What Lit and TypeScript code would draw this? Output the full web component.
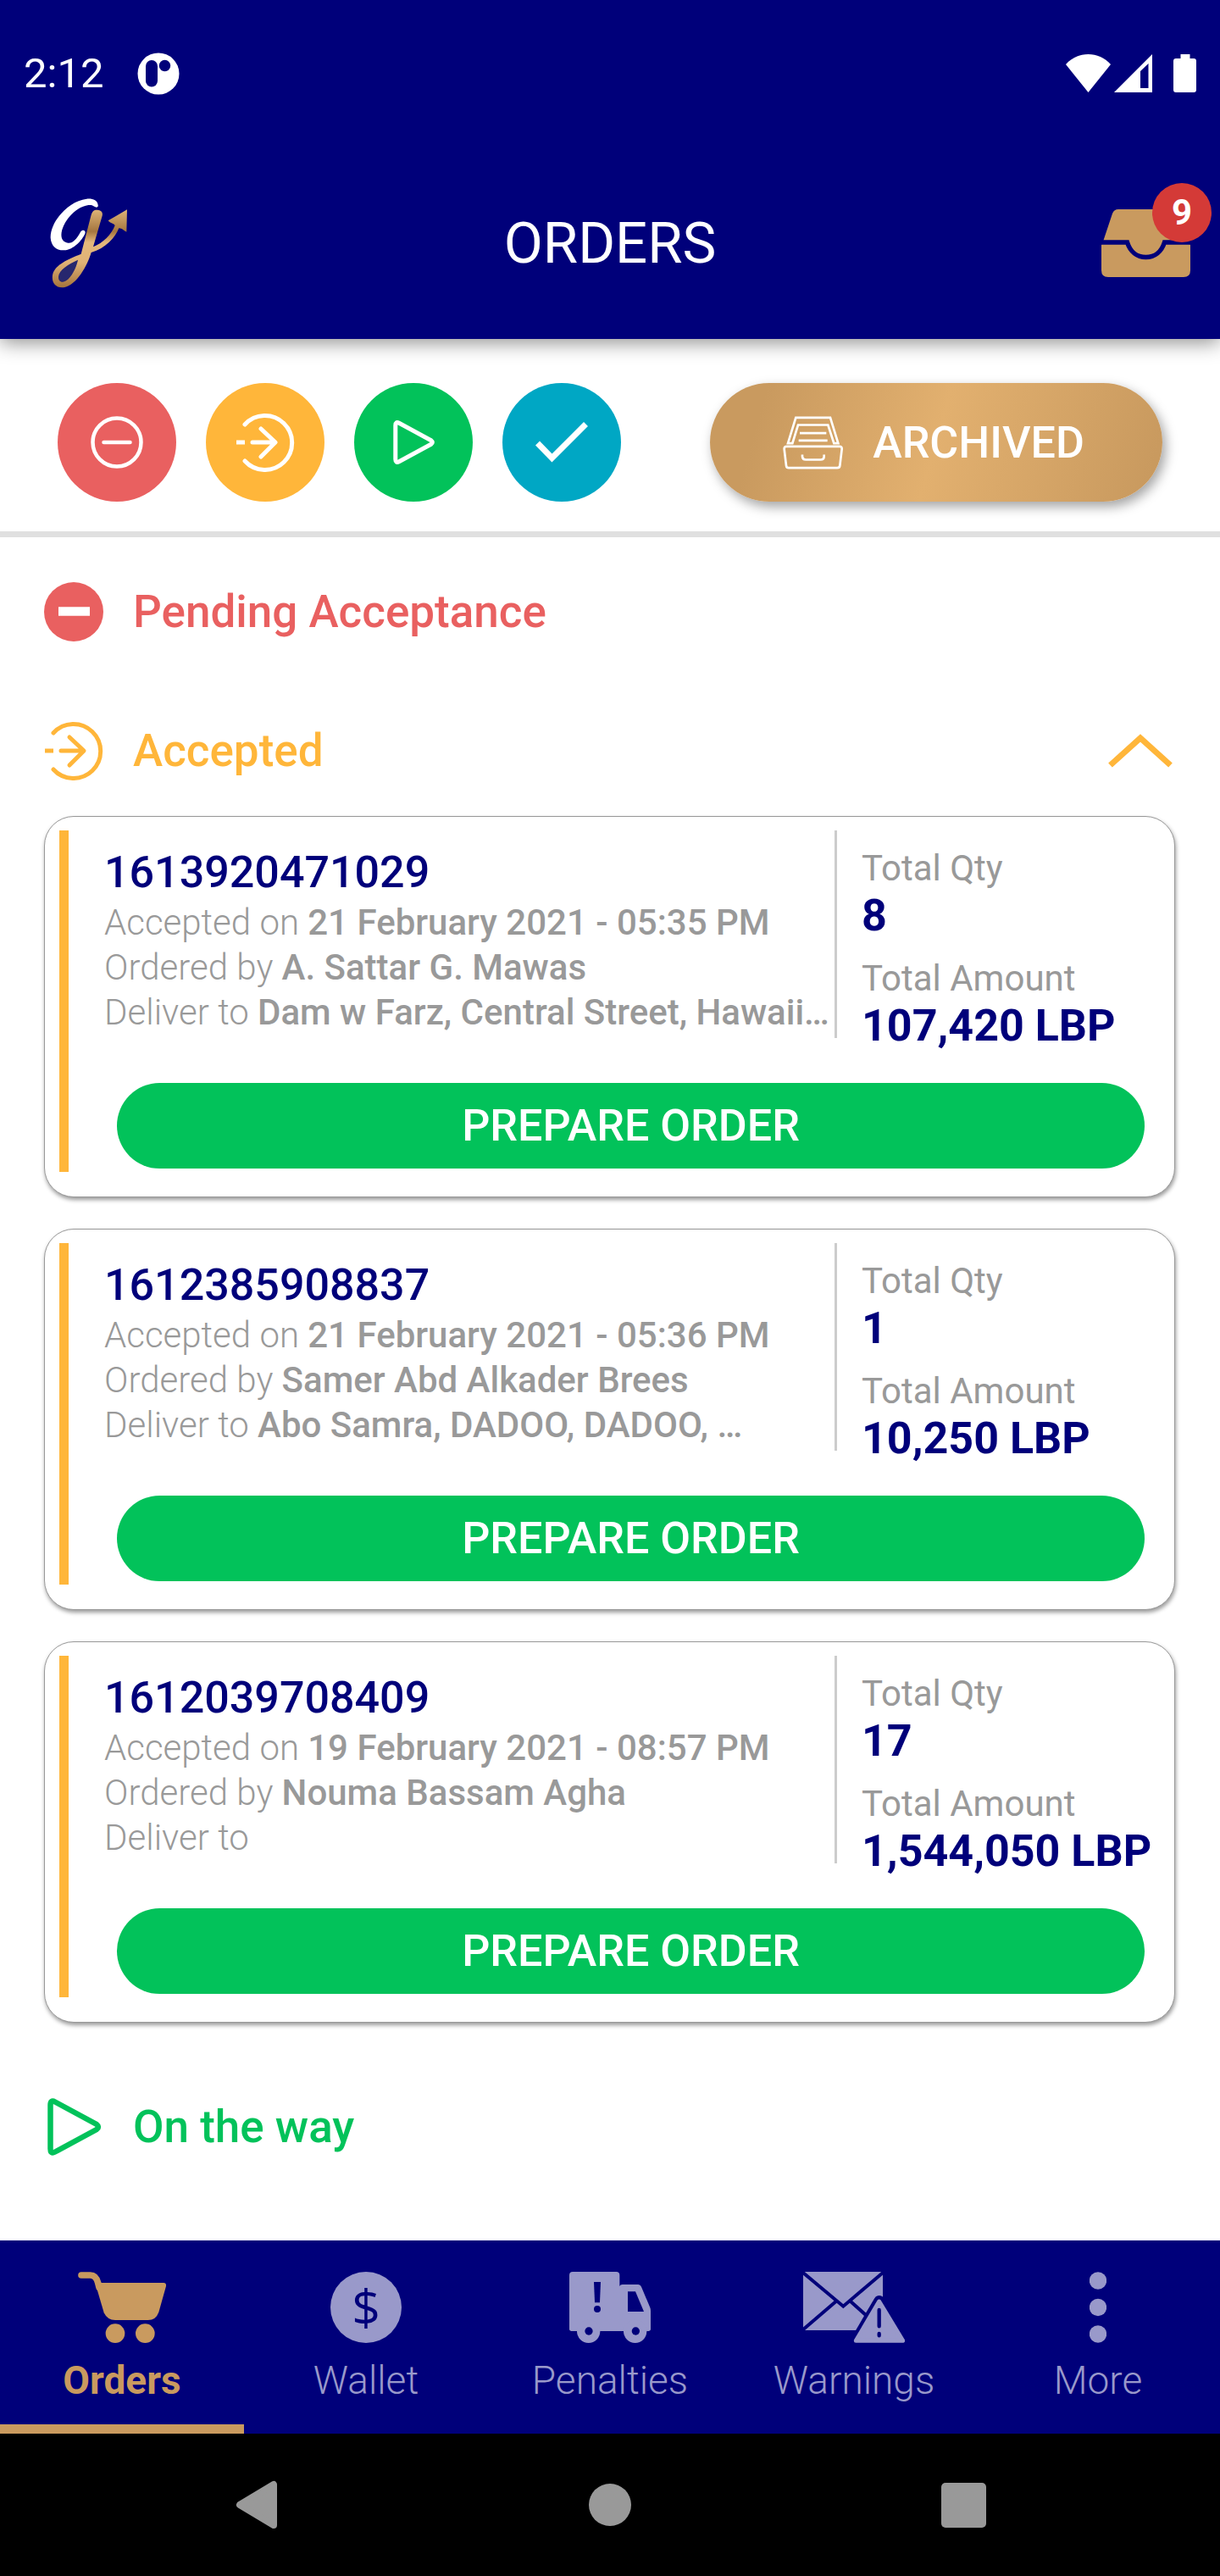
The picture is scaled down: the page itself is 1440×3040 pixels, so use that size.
import { LitElement, html, css, svg } from "lit";
import { customElement, property, state } from "lit/decorators.js";
import { classMap } from "lit/directives/class-map.js";

interface Order {
  id: string;
  acceptedOn: string;
  orderedBy: string;
  deliverTo: string;
  quantity: string;
  amount: string;
}

const ORDERS: Order[] = [
  {
    id: "1613920471029",
    acceptedOn: "21 February 2021 - 05:35 PM",
    orderedBy: "A. Sattar G. Mawas",
    deliverTo: "Dam w Farz, Central Street, Hawaii…",
    quantity: "8",
    amount: "107,420 LBP",
  },
  {
    id: "1612385908837",
    acceptedOn: "21 February 2021 - 05:36 PM",
    orderedBy: "Samer Abd Alkader Brees",
    deliverTo: "Abo Samra, DADOO, DADOO, …",
    quantity: "1",
    amount: "10,250 LBP",
  },
  {
    id: "1612039708409",
    acceptedOn: "19 February 2021 - 08:57 PM",
    orderedBy: "Nouma Bassam Agha",
    deliverTo: "",
    quantity: "17",
    amount: "1,544,050 LBP",
  },
];

const acceptedShape = svg`
  <g fill="none" stroke="currentColor" stroke-width="5" stroke-linecap="round" stroke-linejoin="round">
    <path d="M11 14A32 32 0 1 1 11 57"/>
    <path d="M20 35H46M30 19L47 35L30 52"/>
    <path d="M1 35H11" stroke-linecap="butt"/>
  </g>`;

const playShape = svg`
  <path d="M7.500 9Q7.500 2.500 13 5.500L62 32Q66 35 62 38L13 64.500Q7.500 67.500 7.500 61Z" fill="none" stroke="currentColor" stroke-width="6.500"/>`;

const icons = {
  pendingOutline: html`<svg width="62" height="62" viewBox="0 0 62 62" aria-hidden="true">
    <circle cx="31" cy="31" r="28.500" fill="none" stroke="currentColor" stroke-width="4.500"/>
    <path d="M15.500 31H46.500" stroke="currentColor" stroke-width="4.500" stroke-linecap="round"/>
  </svg>`,
  pendingSolid: html`<svg width="70" height="70" viewBox="0 0 70 70" aria-hidden="true">
    <circle cx="35" cy="35" r="35" fill="currentColor"/>
    <path d="M17 34.500H54" stroke="#fff" stroke-width="10.500"/>
  </svg>`,
  accepted: html`<svg width="70" height="70" viewBox="0 0 70 70" aria-hidden="true">${acceptedShape}</svg>`,
  play: html`<svg width="70" height="70" viewBox="0 0 70 70" aria-hidden="true">${playShape}</svg>`,
  playSmall: html`<svg width="54" height="54" viewBox="0 0 70 70" aria-hidden="true">${playShape}</svg>`,
  check: html`<svg width="62" height="48" viewBox="0 0 62 48" aria-hidden="true">
    <path d="M2.500 25L19.500 42.500L59.500 2.500" fill="none" stroke="currentColor" stroke-width="7"/>
  </svg>`,
  chevron: html`<svg width="76" height="40" viewBox="0 0 76 40" aria-hidden="true">
    <path d="M2.500 37L38 5L73.500 37" fill="none" stroke="currentColor" stroke-width="7"/>
  </svg>`,
  archive: html`<svg width="71" height="63" viewBox="26 32 213 188" aria-hidden="true">
    <g fill="none" stroke="currentColor" stroke-width="8">
      <path d="M44 128L72 37H194L222 128H207L186 63H80L60 128Z"/>
      <path d="M86 92H180M82 118H184"/>
      <path d="M40 139H226Q236 139 235 149L228 207Q227 215 219 215H47Q39 215 38 207L31 149Q30 139 40 139Z"/>
      <path d="M95 168V175Q96 186 107 186H160Q172 186 172 175V168"/>
    </g>
  </svg>`,
  inbox: html`<svg width="105" height="80" viewBox="1300 246 105 80" aria-hidden="true">
    <path d="M1302 284L1313 251Q1315 246 1320 246H1385Q1390 246 1392 251L1403 284L1405 288V318Q1405 326 1397 326H1308Q1300 326 1300 318V288Z" fill="#c99a5f"/>
    <path d="M1296 285H1330.500C1334 296 1342 302.500 1352.500 302.500S1371 296 1374.500 285H1409" fill="none" stroke="#00007a" stroke-width="5.500"/>
  </svg>`,
  logo: html`<svg width="92" height="106" viewBox="28 22 276 318" aria-hidden="true">
    <defs>
      <linearGradient id="gold" x1="0" y1="62" x2="0" y2="338" gradientUnits="userSpaceOnUse">
        <stop offset="0" stop-color="#deb478"/>
        <stop offset="0.280" stop-color="#a5763f"/>
        <stop offset="0.420" stop-color="#e5b87c"/>
        <stop offset="0.680" stop-color="#e0b276"/>
        <stop offset="1" stop-color="#a5743c"/>
      </linearGradient>
    </defs>
    <path d="M127 240C95 255 60 275 58 300C58 318 72 322 85 314C105 300 120 270 127 240Z" fill="#27276e"/>
    <path fill="url(#gold)" fill-rule="evenodd" d="M173 84C177 67 185 62 196 63C209 64 216 71 213 84L181 194C216 180 246 150 258 118C252 110 240 110 234 101L301 62L299 141C290 138 284 128 272 128C260 160 225 200 174 214C160 262 122 328 80 337C48 343 31 318 38 290C48 256 92 238 138 219ZM127 240C95 255 60 275 58 300C58 318 72 322 85 314C105 300 120 270 127 240Z"/>
    <path d="M198 46C196 28 178 22 158 24C90 32 28 108 30 162C32 190 50 207 78 206C112 204 142 170 152 147C156 135 144 131 136 141C122 167 108 182 92 180C70 178 64 158 71 133C82 95 122 52 164 46C180 44 184 52 193 54C198 53 199 50 198 46Z" fill="#fff"/>
  </svg>`,
  cart: html`<svg width="104" height="84" viewBox="36 33 312 252" aria-hidden="true">
    <path d="M48 45H80C94 45 102 53 107 72L111 88" fill="none" stroke="currentColor" stroke-width="23" stroke-linecap="round"/>
    <path d="M104 72H340Q350 73 348 84L322 176Q312 204 284 204H168Q140 204 128 178L98 76Z" fill="currentColor"/>
    <circle cx="168" cy="251" r="34" fill="currentColor"/>
    <circle cx="274" cy="251" r="34" fill="currentColor"/>
  </svg>`,
  wallet: html`<svg width="84" height="84" viewBox="0 0 84 84" aria-hidden="true">
    <circle cx="42" cy="42" r="42" fill="currentColor"/>
    <text x="42" y="64" text-anchor="middle" font-family="Open Sans, sans-serif" font-weight="500" font-size="59" fill="#00007a">$</text>
  </svg>`,
  truck: html`<svg width="96" height="84" viewBox="36 33 288 252" aria-hidden="true">
    <path fill="currentColor" d="M48 33H202Q214 33 214 45V84Q216 78 224 78H280Q288 78 291 86L322 160Q324 165 324 172V236Q324 243 312 243H48Q36 243 36 236V45Q36 33 48 33Z"/>
    <circle cx="104" cy="244" r="41" fill="currentColor"/>
    <circle cx="269" cy="244" r="41" fill="currentColor"/>
    <g fill="#00007a">
      <circle cx="105" cy="243" r="14"/>
      <circle cx="271" cy="243" r="14"/>
      <path d="M243 103H270L300 174H243Z"/>
      <path d="M123 69H147L144 142H126Z"/>
      <circle cx="135" cy="165" r="12"/>
    </g>
  </svg>`,
  warnings: html`<svg width="120" height="84" viewBox="864 33 360 252" aria-hidden="true">
    <path d="M864 33H1146V240H864Z" fill="currentColor"/>
    <path d="M860 33L1006 155L1150 33M860 241L980 138M1032 138L1090 190" fill="none" stroke="#00007a" stroke-width="12"/>
    <path d="M1133 136L1218 278H1050Z" fill="#00007a" stroke="#00007a" stroke-width="38" stroke-linejoin="round"/>
    <path d="M1133 138L1217 277H1051Z" fill="currentColor" stroke="currentColor" stroke-width="15" stroke-linejoin="round"/>
    <path d="M1133 168V226M1133 252V259" stroke="#00007a" stroke-width="13" stroke-linecap="round"/>
  </svg>`,
  more: html`<svg width="20" height="84" viewBox="0 0 20 84" aria-hidden="true">
    <g fill="currentColor">
      <circle cx="10" cy="10.500" r="10.200"/>
      <circle cx="10" cy="42" r="10.200"/>
      <circle cx="10" cy="73.500" r="10.200"/>
    </g>
  </svg>`,
};

@customElement("status-bar")
class StatusBar extends LitElement {
  static styles = css`
    :host {
      display: flex;
      align-items: center;
      justify-content: space-between;
      height: 173px;
      padding: 0 28px;
      color: #fff;
      font-size: 49px;
      line-height: 58px;
    }
    .group {
      display: flex;
      align-items: center;
    }
    .left {
      gap: 40px;
    }
    .battery {
      margin-left: 25px;
    }
    .signal {
      margin-left: 4px;
    }
    svg {
      display: block;
    }
  `;

  render() {
    return html`
      <div class="group left">
        <span>2:12</span>
        <svg width="50" height="50" viewBox="0 0 50 50" aria-hidden="true">
          <circle cx="25" cy="25" r="24.500" fill="#fff"/>
          <rect x="10" y="9" width="14" height="31.500" rx="7" fill="#00007a"/>
          <circle cx="32.500" cy="15.500" r="6.700" fill="#00007a"/>
        </svg>
      </div>
      <div class="group">
        <svg width="53" height="45" viewBox="0 0 53 45" aria-hidden="true">
          <path d="M0 12C14 -4 39 -4 53 12L26.500 45Z" fill="#fff"/>
        </svg>
        <svg class="signal" width="45" height="45" viewBox="0 0 45 45" aria-hidden="true">
          <path fill="#fff" fill-rule="evenodd" d="M0 45L45 0V45ZM31 20V40H40.500V11Z"/>
        </svg>
        <svg class="battery" width="27" height="45" viewBox="0 0 27 45" aria-hidden="true">
          <path fill="#fff" d="M8.500 0H19.500V5H24Q27 5 27 8V42Q27 45 24 45H3Q0 45 0 42V8Q0 5 3 5H8.500Z"/>
        </svg>
      </div>
    `;
  }
}

@customElement("order-card")
class OrderCard extends LitElement {
  @property({ attribute: false }) order!: Order;

  static styles = css`
    :host {
      display: block;
    }
    .card {
      display: flex;
      box-sizing: border-box;
      padding: 16px 16px 29px 17px;
      border: 1px solid #999;
      border-radius: 35px;
      background: #fff;
      box-shadow: 1px 3px 5px rgba(0, 0, 0, 0.4);
      color: #999;
      font-size: 42px;
    }
    .accent {
      flex: none;
      width: 11px;
      background: #ffb63a;
    }
    .body {
      flex: 1;
      min-width: 0;
      padding-left: 42px;
    }
    .summary {
      display: flex;
    }
    .details {
      flex: 1;
      min-width: 0;
      padding-top: 19px;
      white-space: nowrap;
    }
    .number {
      margin: 0 0 2px;
      color: #00007a;
      font-size: 52px;
      line-height: 61px;
      font-weight: 500;
    }
    .line {
      margin: 0;
      line-height: 53px;
      font-weight: 300;
    }
    .value {
      font-weight: 500;
    }
    .totals {
      flex: none;
      box-sizing: border-box;
      width: 353px;
      margin: 0;
      padding-top: 19px;
      white-space: nowrap;
    }
    .divider {
      flex: none;
      width: 3px;
      margin: 0 29px 16px 0;
      background: #ccc;
    }
    .label {
      line-height: 51px;
    }
    .total {
      margin: 0 0 18px;
      color: #00007a;
      font-size: 52px;
      line-height: 61px;
      font-weight: 700;
    }
    .total:last-child {
      margin-bottom: 0;
    }
    .actions {
      padding: 37px 19px 4px 15px;
    }
    .prepare {
      display: block;
      width: 100%;
      height: 101px;
      padding: 0;
      border: 0;
      border-radius: 51px;
      background: #02c25a;
      color: #fff;
      font: 500 52px/61px Roboto, sans-serif;
    }
  `;

  render() {
    const o = this.order;
    return html`
      <article class="card">
        <div class="accent"></div>
        <div class="body">
          <div class="summary">
            <div class="details">
              <h3 class="number">${o.id}</h3>
              <p class="line">Accepted on <span class="value">${o.acceptedOn}</span></p>
              <p class="line">Ordered by <span class="value">${o.orderedBy}</span></p>
              <p class="line">Deliver to <span class="value">${o.deliverTo}</span></p>
            </div>
            <div class="divider"></div>
            <dl class="totals">
              <dt class="label">Total Qty</dt>
              <dd class="total">${o.quantity}</dd>
              <dt class="label">Total Amount</dt>
              <dd class="total">${o.amount}</dd>
            </dl>
          </div>
          <div class="actions">
            <button class="prepare" type="button">PREPARE ORDER</button>
          </div>
        </div>
      </article>
    `;
  }
}

@customElement("app-root")
class AppRoot extends LitElement {
  @state() private acceptedOpen = true;
  @state() private activeTab = "Orders";

  static styles = css`
    :host {
      display: flex;
      flex-direction: column;
      min-height: 100vh;
      background: #fff;
      font-family: Roboto, sans-serif;
    }
    button {
      padding: 0;
      border: 0;
      background: none;
      color: inherit;
      font: inherit;
    }
    svg {
      display: block;
    }
    .header {
      background: #00007a;
      box-shadow: 0 4px 22px rgba(0, 0, 0, 0.45);
    }
    .appbar {
      display: grid;
      grid-template-columns: 1fr auto 1fr;
      align-items: center;
      height: 227px;
      padding: 0 35px 0 59px;
      color: #fff;
    }
    .title {
      grid-column: 2;
      margin: 0;
      padding-right: 24px;
      font-size: 67px;
      line-height: 80px;
      font-weight: 400;
    }
    .inbox {
      position: relative;
      justify-self: end;
    }
    .badge {
      position: absolute;
      top: -31px;
      right: -25px;
      width: 70px;
      border-radius: 35px;
      background: #d43a37;
      font-size: 42px;
      line-height: 70px;
      font-weight: 700;
      text-align: center;
    }
    .toolbar {
      display: flex;
      align-items: center;
      justify-content: space-between;
      padding: 52px 68px 35px;
      border-bottom: 7px solid #e0e0e0;
    }
    .filters {
      display: flex;
      gap: 35px;
    }
    .filter {
      display: grid;
      place-items: center;
      width: 140px;
      height: 140px;
      border-radius: 50%;
      color: #fff;
    }
    .filter.red {
      background: #e96060;
    }
    .filter.amber {
      background: #ffb63a;
    }
    .filter.green {
      background: #02c25a;
    }
    .filter.teal {
      background: #00a7c4;
    }
    .archived {
      display: flex;
      align-items: center;
      justify-content: center;
      gap: 35px;
      box-sizing: border-box;
      width: 534px;
      height: 140px;
      padding-right: 6px;
      border-radius: 70px;
      background: linear-gradient(106deg, #c99a5f 12%, #e2b06f 50%, #c99a5f 96%);
      box-shadow: 4px 6px 14px rgba(0, 0, 0, 0.36);
      color: #fff;
      font-size: 52px;
      line-height: 61px;
      font-weight: 500;
    }
    .content {
      flex: 1;
      padding: 53px 53px 99px 52px;
    }
    .section {
      display: flex;
      align-items: center;
      gap: 35px;
      width: 100%;
      height: 70px;
      padding-right: 3px;
      font-size: 53px;
      line-height: 61px;
      font-weight: 500;
      text-align: left;
    }
    .section .name {
      flex: 1;
    }
    .pending {
      margin-bottom: 94px;
      color: #e96060;
    }
    .accepted {
      color: #ffb63a;
    }
    .on-the-way {
      margin-top: 88px;
      color: #02c25a;
    }
    .orders {
      display: flex;
      flex-direction: column;
      gap: 37px;
      padding-top: 42px;
    }
    .tabs {
      display: grid;
      grid-template-columns: repeat(5, minmax(0, 1fr));
      background: #00007a;
    }
    .tab {
      display: flex;
      flex-direction: column;
      align-items: center;
      gap: 17px;
      box-sizing: border-box;
      height: 228px;
      padding-top: 37px;
      border-bottom: 11px solid transparent;
      color: #9999ca;
      font-size: 46px;
      line-height: 54px;
      font-weight: 300;
      text-decoration: none;
    }
    .tab.active {
      border-bottom-color: #c99a5f;
      color: #c99a5f;
      font-weight: 700;
    }
    .system {
      display: grid;
      grid-template-columns: repeat(3, minmax(0, 1fr));
      place-items: center;
      height: 168px;
      padding: 0 94px;
      background: #000;
    }
  `;

  private tabs = [
    { name: "Orders", icon: icons.cart },
    { name: "Wallet", icon: icons.wallet },
    { name: "Penalties", icon: icons.truck },
    { name: "Warnings", icon: icons.warnings },
    { name: "More", icon: icons.more },
  ];

  private selectTab(event: Event, name: string) {
    event.preventDefault();
    this.activeTab = name;
  }

  render() {
    return html`
      <header class="header">
        <status-bar></status-bar>
        <div class="appbar">
          ${icons.logo}
          <h1 class="title">ORDERS</h1>
          <button class="inbox" type="button" aria-label="Inbox">
            ${icons.inbox}<span class="badge">9</span>
          </button>
        </div>
      </header>

      <div class="toolbar">
        <div class="filters">
          <button class="filter red" type="button" aria-label="Pending Acceptance">${icons.pendingOutline}</button>
          <button class="filter amber" type="button" aria-label="Accepted">${icons.accepted}</button>
          <button class="filter green" type="button" aria-label="On the way">${icons.playSmall}</button>
          <button class="filter teal" type="button" aria-label="Delivered">${icons.check}</button>
        </div>
        <button class="archived" type="button">${icons.archive}<span>ARCHIVED</span></button>
      </div>

      <main class="content">
        <button class="section pending" type="button">
          ${icons.pendingSolid}<span class="name">Pending Acceptance</span>
        </button>
        <button
          class="section accepted"
          type="button"
          aria-expanded=${this.acceptedOpen ? "true" : "false"}
          @click=${() => (this.acceptedOpen = !this.acceptedOpen)}
        >
          ${icons.accepted}<span class="name">Accepted</span>${icons.chevron}
        </button>
        ${this.acceptedOpen
          ? html`<div class="orders">
              ${ORDERS.map((order) => html`<order-card .order=${order}></order-card>`)}
            </div>`
          : null}
        <button class="section on-the-way" type="button">
          ${icons.play}<span class="name">On the way</span>
        </button>
      </main>

      <nav class="tabs">
        ${this.tabs.map(
          (tab) => html`<a
            class=${classMap({ tab: true, active: tab.name === this.activeTab })}
            href="#${tab.name.toLowerCase()}"
            @click=${(event: Event) => this.selectTab(event, tab.name)}
            >${tab.icon}<span>${tab.name}</span></a
          >`
        )}
      </nav>

      <div class="system">
        <button type="button" aria-label="Back">
          <svg width="50" height="58" viewBox="0 0 50 58" aria-hidden="true">
            <path d="M5 29L45 5V53Z" fill="#999" stroke="#999" stroke-width="8" stroke-linejoin="round"/>
          </svg>
        </button>
        <button type="button" aria-label="Home">
          <svg width="50" height="50" viewBox="0 0 50 50" aria-hidden="true">
            <circle cx="25" cy="25" r="25" fill="#999"/>
          </svg>
        </button>
        <button type="button" aria-label="Recent apps">
          <svg width="53" height="53" viewBox="0 0 53 53" aria-hidden="true">
            <rect width="53" height="53" rx="5" fill="#999"/>
          </svg>
        </button>
      </div>
    `;
  }
}
